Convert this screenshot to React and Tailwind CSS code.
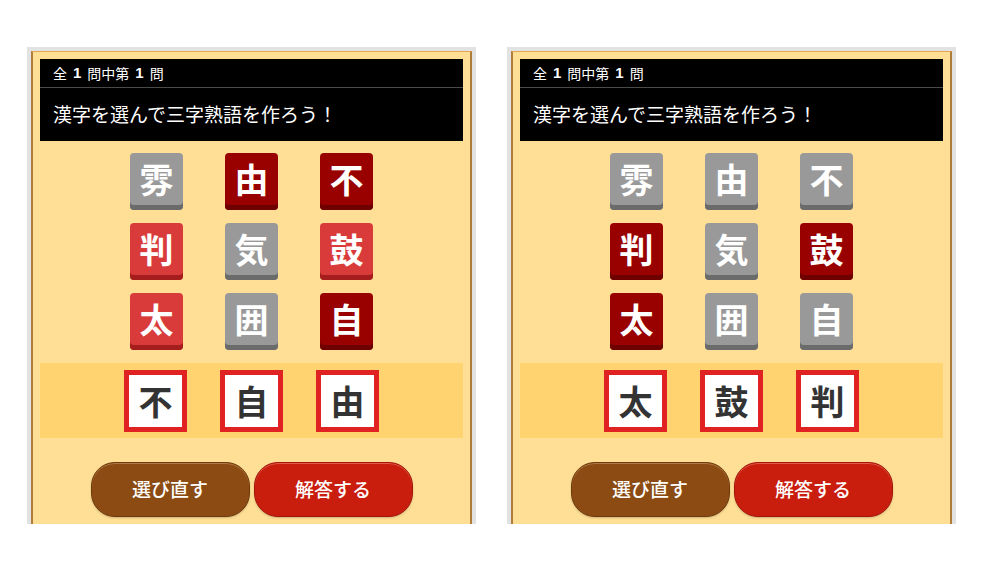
import React from 'react';

const font = { fontFamily: '"Noto Sans CJK JP", "Noto Sans", sans-serif' };
const num = { fontFamily: '"Liberation Sans", sans-serif' };

const tileStyles = {
  gray: 'bg-[#999999] shadow-[inset_0_-5px_0_#6b6b6b]',
  dark: 'bg-[#990000] shadow-[inset_0_-5px_0_#6e0000]',
  red: 'bg-[#d93b3b] shadow-[inset_0_-5px_0_#a51d1d]',
};

const panels = [
  {
    tiles: [
      ['雰', 'gray'], ['由', 'dark'], ['不', 'dark'],
      ['判', 'red'], ['気', 'gray'], ['鼓', 'red'],
      ['太', 'red'], ['囲', 'gray'], ['自', 'dark'],
    ],
    answer: ['不', '自', '由'],
  },
  {
    tiles: [
      ['雰', 'gray'], ['由', 'gray'], ['不', 'gray'],
      ['判', 'dark'], ['気', 'gray'], ['鼓', 'dark'],
      ['太', 'dark'], ['囲', 'gray'], ['自', 'gray'],
    ],
    answer: ['太', '鼓', '判'],
  },
];

function Panel({ tiles, answer }) {
  return (
    <div className="w-[449px] h-[477px] border-4 border-b-0 border-[#e2e2e2] overflow-hidden">
      <div className="h-full bg-[#ffdf95] border-x-2 border-t border-x-[#b07c3c] border-t-[#e3a650] px-[7px] pt-[7px]">
        {/* header */}
        <div className="bg-black text-white">
          <div className="h-[29px] flex items-center px-[13px] text-[14px] border-b border-[#4a4a4a]">
            全<b className="mx-[6px] text-[15px]" style={num}>1</b>問中第<b className="mx-[6px] text-[15px]" style={num}>1</b>問
          </div>
          <div className="h-[53px] flex items-center px-[13px] text-[19px]">
            漢字を選んで三字熟語を作ろう！
          </div>
        </div>

        {/* tiles */}
        <div className="grid grid-cols-[53px_53px_53px] justify-center gap-x-[42px] gap-y-[13px] mt-[12px]">
          {tiles.map(([k, c], i) => (
            <div
              key={i}
              className={`h-[57px] rounded-[4px] pb-[5px] flex items-center justify-center text-white font-bold text-[34px] leading-none ${tileStyles[c]}`}
            >
              {k}
            </div>
          ))}
        </div>

        {/* answer */}
        <div className="mt-[13px] h-[75px] bg-[#ffd470] flex items-center justify-center gap-[33px]">
          {answer.map((k, i) => (
            <div
              key={i}
              className="w-[63px] h-[62px] bg-white border-[5px] border-[#e02222] flex items-center justify-center text-[34px] font-bold text-[#333333] leading-none"
            >
              {k}
            </div>
          ))}
        </div>

        {/* buttons */}
        <div className="mt-[24px] flex justify-center gap-[4px]">
          <button className="w-[159px] h-[55px] rounded-[24px] bg-[#8b4b12] border border-[#6f3a0c] shadow-[inset_0_1px_0_#b07a48,0_1px_2px_rgba(0,0,0,0.2)] text-white text-[19px] font-medium">
            選び直す
          </button>
          <button className="w-[159px] h-[55px] rounded-[24px] bg-[#c91d0e] border border-[#a3150a] shadow-[inset_0_1px_0_#e05a48,0_1px_2px_rgba(0,0,0,0.2)] text-white text-[19px] font-medium">
            解答する
          </button>
        </div>
      </div>
    </div>
  );
}

export default function App() {
  return (
    <div className="w-[984px] h-[573px] bg-white flex gap-[31px] pl-[27px] pt-[47px]" style={font}>
      {panels.map((p, i) => (
        <Panel key={i} {...p} />
      ))}
    </div>
  );
}
